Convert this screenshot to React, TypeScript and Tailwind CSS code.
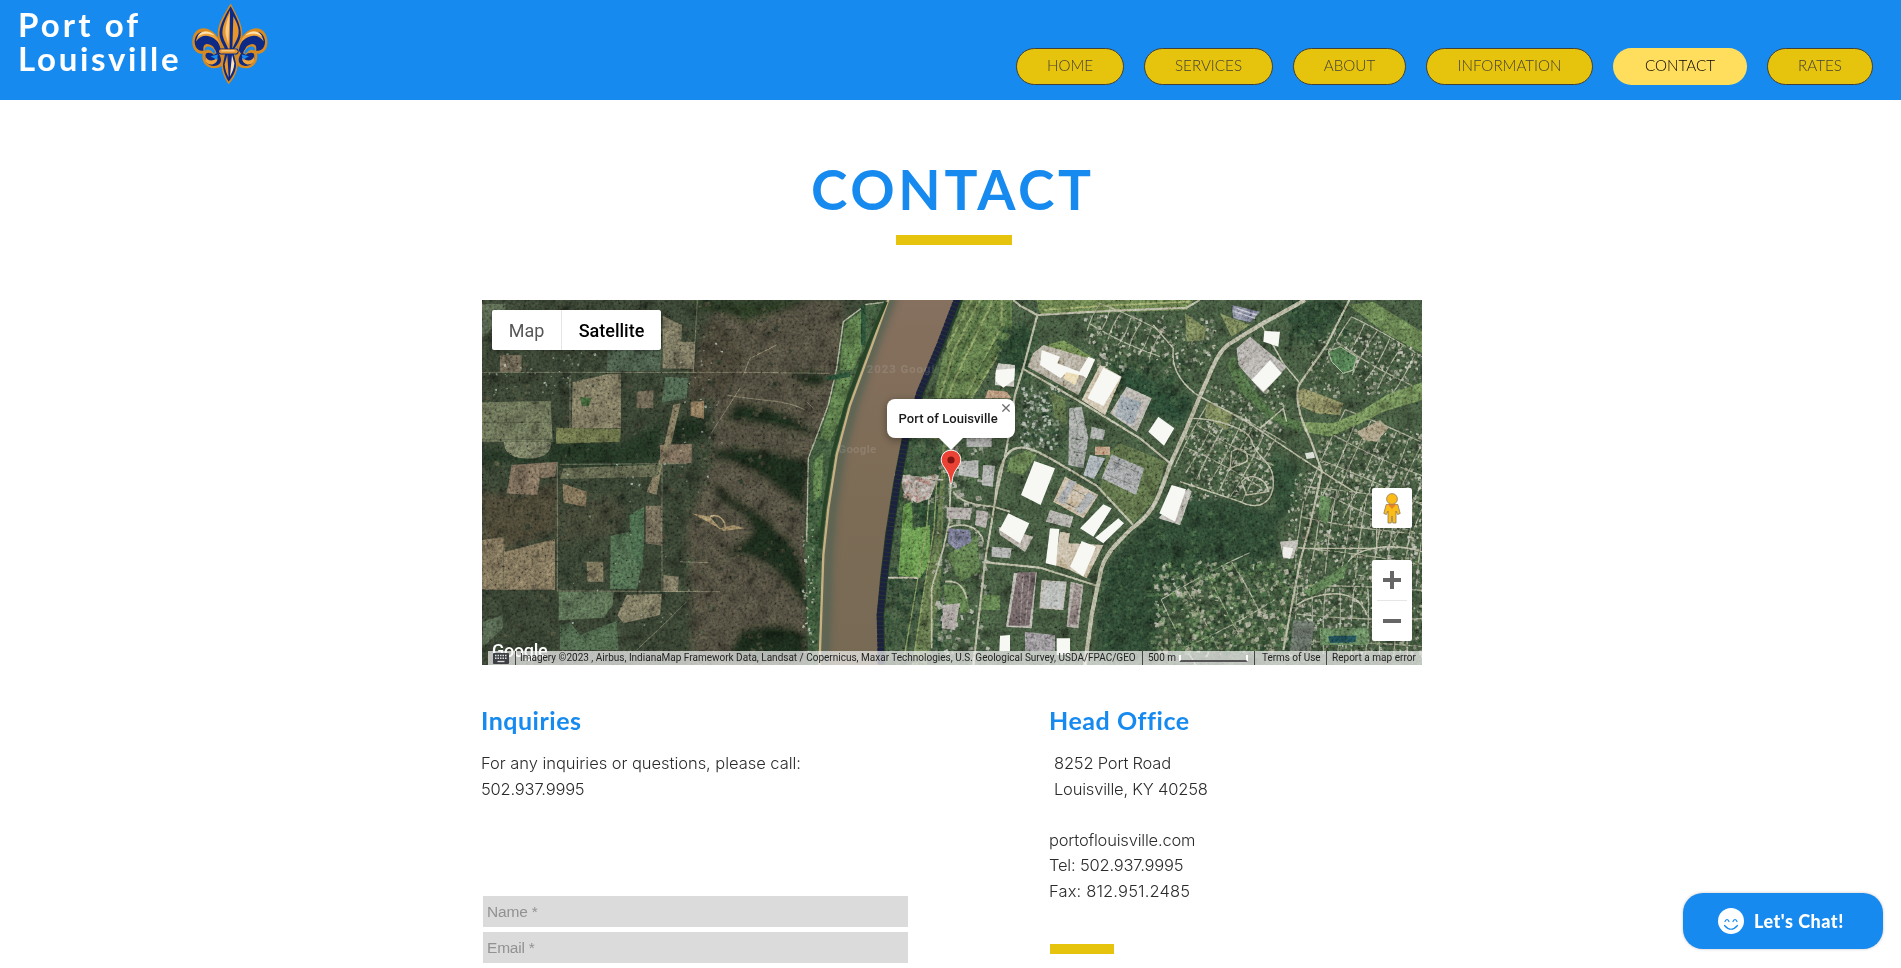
import type { ReactNode } from "react";

const NAV = [
  { label: "HOME", width: "w-[108px]" },
  { label: "SERVICES", width: "w-[129px]" },
  { label: "ABOUT", width: "w-[113px]" },
  { label: "INFORMATION", width: "w-[167px]" },
  { label: "CONTACT", width: "w-[134px]", active: true },
  { label: "RATES", width: "w-[106px]" },
];

function FleurDeLis() {
  const side = (
    <g>
      <path d="M668 150C656 74 581 62 577 122C575 150 594 164 608 160C602 188 624 210 654 203C674 198 676 172 668 160Z" fill="#d98a1f" />
      <path d="M663 150C648 88 590 78 584 122C583 142 596 156 611 151C606 132 622 124 640 140L650 160C632 162 628 154 618 160C608 184 630 204 652 195C668 188 664 172 656 160Z" fill="#0c2a86" />
      <path d="M588 124C596 76 646 84 662 136C642 104 606 96 588 124Z" fill="#f0a43a" />
      <path d="M592 110C604 88 628 90 644 106C624 98 608 98 592 110Z" fill="#ffe2b0" />
      <path d="M612 148C616 134 630 134 642 147C650 156 648 162 640 162C636 152 624 146 616 153Z" fill="#168aef" stroke="#d98a1f" strokeWidth="3" />
      <path d="M616 166C620 184 640 186 652 172C656 190 628 204 616 182Z" fill="#f0a43a" />
      <path d="M632 168L654 163L650 179Z" fill="#168aef" />
    </g>
  );
  return (
    <svg viewBox="570 0 240 260" className="h-[87px] w-[80px]">
      {side}
      <g transform="translate(1379 0) scale(-1 1)">{side}</g>
      <path d="M692 10C672 42 648 78 654 112C658 130 668 142 672 154L664 190C664 214 676 240 686 252C700 238 714 214 713 190L704 154C712 140 724 128 727 108C730 76 708 40 692 10Z" fill="#d98a1f" />
      <path d="M692 18C674 48 655 80 659 108C663 128 673 138 677 152L669 192C669 212 678 232 686 244C698 230 709 212 708 190L699 152C707 138 719 126 722 106C725 78 706 44 692 18Z" fill="#0c2a86" />
      <path d="M690 30C676 58 664 84 668 106C672 124 682 136 686 150L689 150Z" fill="#e8952a" />
      <path d="M700 48C712 70 720 88 714 108C710 122 702 132 697 146Z" fill="#e8952a" />
      <path d="M689 40C680 64 674 86 677 104L685 132Z" fill="#f9c987" />
      <path d="M682 164L674 192C675 208 680 222 686 232Z" fill="#e8952a" />
      <path d="M696 164L703 190C702 206 696 218 690 228Z" fill="#ffe2b0" />
      <rect x="654" y="145" width="62" height="18" rx="9" fill="#0c2a86" />
      <rect x="657" y="147" width="56" height="13" rx="6.5" fill="#e8952a" />
      <path d="M664 152H704" stroke="#ffe2b0" strokeWidth="3" />
    </svg>
  );
}

/* Small deterministic generator so the scattered houses stay in place. */
function makeRandom(seed: number) {
  let s = seed;
  return () => {
    s = (s * 16807) % 2147483647;
    return s / 2147483647;
  };
}

function Scatter({ seed, n, x, y, w, h, size, colors }: { seed: number; n: number; x: number; y: number; w: number; h: number; size: number; colors: string[] }) {
  const r = makeRandom(seed);
  const items: ReactNode[] = [];
  for (let i = 0; i < n; i++) {
    const px = x + r() * w;
    const py = y + r() * h;
    const a = size * (0.5 + r());
    const b = size * (0.5 + r());
    items.push(
      <rect key={i} x={px} y={py} width={a} height={b} fill={colors[Math.floor(r() * colors.length)]} transform={`rotate(${Math.floor(r() * 60) - 30} ${px} ${py})`} opacity={0.35 + r() * 0.45} />
    );
  }
  return <g>{items}</g>;
}

function Streets({ x, y, w, h, step, angle }: { x: number; y: number; w: number; h: number; step: number; angle: number }) {
  const lines: ReactNode[] = [];
  for (let i = 0; i * step < w; i++) lines.push(<path key={`v${i}`} d={`M${x + i * step} ${y}q${i % 2 ? 10 : -8} ${h / 2} 0 ${h}`} />);
  for (let j = 0; j * step * 2 < h; j++) lines.push(<path key={`h${j}`} d={`M${x} ${y + j * step * 2}q${w / 2} ${j % 2 ? 14 : -10} ${w} 0`} />);
  return (
    <g transform={`rotate(${angle} ${x + w / 2} ${y + h / 2})`} stroke="#9d9b83" strokeWidth="3.5" fill="none" opacity=".8">
      {lines}
    </g>
  );
}

const HOUSES = ["#aaa794", "#8f8b7a", "#77766a", "#c4c1b1", "#22391f", "#1d3420", "#2f4a2b", "#5c6b45"];
const TREES = ["#1c3522", "#1d3a22", "#27432a", "#33502f", "#183020"];
const SCRUB = ["#222b20", "#1d281e", "#403c30", "#343e2d", "#464534"];

function West() {
  return (
    <g transform="translate(480 295) scale(.33333)">
      <rect x="0" y="0" width="1260" height="1120" fill="#2d3528" />
      <g filter="url(#soft)">
        <path d="M700 15H1090V500L980 620V1110H640L620 700L700 480Z" fill="#413e30" />
        <path d="M0 590L90 600L230 560V710L70 770L0 730Z" fill="#3b392b" />
        <path d="M230 410L420 450L545 380V500L400 520L250 510L0 500V460L200 490Z" fill="#1a2a1f" />
        <path d="M760 330C840 320 960 360 1010 420C900 400 800 370 740 380ZM690 470C800 440 960 490 990 500L970 640C880 560 780 490 690 490Z" fill="#122218" />
        <path d="M700 560C760 630 850 640 900 720C940 730 980 800 980 940C920 860 860 760 730 780C800 730 860 720 780 650C730 630 700 600 700 560Z" fill="#122218" />
        <path d="M780 1010C850 980 940 990 975 1020V1100H740ZM930 230L1040 235L1030 270C990 280 950 260 930 230ZM560 380L680 370L660 430L580 445Z" fill="#132319" />
        <path d="M640 15H980C900 60 860 50 800 80C760 50 700 60 640 40Z" fill="#242e1f" />
        <path d="M250 640L390 600L440 640L400 720L240 740Z" fill="#35372a" />
        <path d="M690 60L800 180L720 300L620 330L640 200Z" fill="#383429" />
      </g>
      <Scatter seed={71} n={420} x={0} y={20} w={700} h={1080} size={11} colors={SCRUB} />
      <Scatter seed={19} n={260} x={640} y={30} w={350} h={1070} size={10} colors={["#353127", "#424033", "#1d2a1e", "#484335"]} />
      <g opacity=".93">
        <path d="M0 322L212 318L218 440H0Z" fill="#595e48" />
        <path d="M72 440H214C214 480 180 494 130 490C90 486 72 470 72 440Z" fill="#626650" />
        <path d="M278 262L380 238L423 236V400H275Z" fill="#67624e" />
        <path d="M228 398L423 402L420 440L228 446Z" fill="#585d3b" />
        <path d="M95 510L232 500L225 545L180 550L172 600L80 595Z" fill="#66594a" />
        <path d="M248 566L320 590L318 636L250 622Z" fill="#695d48" />
        <path d="M392 722L450 710L480 830L472 882H390Z" fill="#415840" />
        <path d="M448 660L492 636V750L486 830L455 780Z" fill="#39523b" />
        <path d="M0 736L70 726L75 770L225 732V884H0Z" fill="#6a5f4b" />
        <path d="M236 892L402 890L398 930L370 968L236 976Z" fill="#495a43" />
        <path d="M440 900L546 896L540 960L430 985L412 960Z" fill="#686450" />
        <path d="M497 632H546V752L497 745Z" fill="#5e5748" />
        <path d="M320 800H370V860H322Z" fill="#665f4b" />
        <path d="M240 990L270 982L300 1020L410 978L416 1065H240Z" fill="#40543e" />
        <path d="M548 62L606 90L604 140H645L642 222L548 220Z" fill="#66624f" />
        <path d="M382 160L545 165L540 228H382Z" fill="#3c4a3c" />
        <path d="M6 28L76 26V60L6 130Z" fill="#465140" />
        <path d="M540 450L635 446V505H540Z" fill="#66594a" />
        <path d="M580 330L602 325L575 440L548 500L530 600L500 590L548 470Z" fill="#68604c" />
        <path d="M250 520L545 508L530 545L240 552Z" fill="#50533f" />
        <path d="M555 245L625 250L620 310L545 322Z" fill="#405340" />
        <path d="M550 840L596 845L594 890H550Z" fill="#686350" />
        <path d="M10 980L68 960V1000L6 1060Z" fill="#445240" />
        <path d="M60 180H125V230H60ZM470 290L520 285V340H470Z" fill="#5a5344" />
        <path d="M632 320L672 318V372L632 362Z" fill="#75644b" />
        <path d="M635 655L690 665L720 700L760 690L795 700L730 708L700 690Z" fill="#7f6e51" />
        <path d="M690 665C710 655 740 670 735 705" stroke="#a08b66" strokeWidth="4" fill="none" />
        <path d="M300 305L335 310L325 335L305 330Z" fill="#35502f" />
        <path d="M0 382H215M0 433H215M70 740V884" stroke="#3f4436" strokeWidth="2" />
      </g>
      <g fill="none" stroke="#8d8872" strokeWidth="2.5" opacity=".55">
        <path d="M0 232H790L1050 235M232 500V890M240 508L620 506M235 888L720 890M652 15L640 230M546 510V890M790 240L810 190L890 150M740 300C840 320 930 310 990 355M600 800L685 803M270 400L270 240M470 1065L560 980L620 920M1000 340L980 320M780 280L690 420" />
      </g>
      <Scatter seed={5} n={60} x={20} y={170} w={330} h={130} size={5} colors={["#a9b2a8", "#707866", "#202b20"]} />
      <Scatter seed={55} n={50} x={600} y={120} w={130} h={350} size={5} colors={["#a9b2a8", "#707866", "#202b20"]} />
      <Scatter seed={8} n={70} x={260} y={500} w={440} h={500} size={5} colors={["#9baba3", "#5e6a58", "#203020"]} />
      <path d="M1230 15L1160 25L1090 80L1070 220L1045 330L985 490L975 760L985 1110H1020L1045 640L1110 330L1180 140Z" fill="#334730" />
      <path d="M1095 85L1150 45L1145 170L1120 225H1078ZM1075 240H1115L1090 350L1050 440L1020 430ZM1000 500L1030 470L1025 600L1000 620Z" fill="#48613a" />
      <Scatter seed={94} n={90} x={985} y={600} w={40} h={500} size={8} colors={TREES} />
      <Scatter seed={34} n={55} x={965} y={700} w={35} h={390} size={6} colors={["#9aa99e", "#a9aa97", "#263d2a"]} />
      <path d="M1230 20L1160 28L1090 80L1070 220L1045 330L985 490L980 740" fill="none" stroke="#8f937c" strokeWidth="4" />
      <path d="M1150 30V150M1040 250L1110 238" fill="none" stroke="#203c29" strokeWidth="14" />
    </g>
  );
}

function River() {
  return (
    <g transform="translate(480 295) scale(.33333)">
      <path d="M1425 0L1370 150L1310 290L1265 430L1240 560L1215 720L1200 850L1190 960L1195 1120H1500V0Z" fill="#263e27" />
      <path d="M1230 0L1180 140L1110 330L1070 480L1045 640L1030 780L1020 1120H1197L1190 960L1200 850L1215 720L1240 560L1265 430L1310 290L1370 150L1427 0Z" fill="url(#river)" />
      <path d="M1240 0L1190 130L1120 335L1082 480L1057 640L1045 780L1034 1110" fill="none" stroke="#566453" strokeWidth="30" filter="url(#soft)" opacity=".85" />
      <path d="M1230 0L1180 140L1110 330L1070 480L1045 640L1030 780L1018 1120" fill="none" stroke="#c5b181" strokeWidth="7" />
      <path d="M1218 20L1168 140L1098 330L1058 480L1033 640L1020 760" fill="none" stroke="#284427" strokeWidth="11" />
      <path d="M1436 0L1379 150L1320 290L1277 430L1252 560L1228 720L1212 850L1200 960L1203 1120" fill="none" stroke="#1d2140" strokeWidth="20" strokeDasharray="11 2" />
      <text x="1160" y="234" fontFamily="Roboto" fontSize="34" fontWeight="700" letterSpacing="3" fill="#ffffff" opacity=".12">2023 Google</text>
      <text x="1075" y="474" fontFamily="Roboto" fontSize="34" fontWeight="700" letterSpacing="1" fill="#ffffff" opacity=".12">Google</text>
    </g>
  );
}

function East() {
  return (
    <g transform="translate(940 295) scale(.33333)">
      <path d="M60 0H1460V1120H-185L-178 850L-130 560L-60 330Z" fill="#34482f" />
      <Scatter seed={23} n={420} x={-185} y={300} w={190} h={800} size={14} colors={TREES} />
      <path d="M70 15H216V110L95 310H-20L10 180Z" fill="#49612f" />
      <path d="M216 110L95 310M160 15L60 220L20 310M120 15L40 170L0 310M185 15V90L80 300M95 15L20 160" stroke="#66783f" strokeWidth="6" fill="none" />
      <path d="M140 15L60 180L10 300M205 20V80L110 240" stroke="#3a5529" strokeWidth="8" fill="none" />
      <path d="M-110 630L-85 620L-80 700L-30 690V800L-60 850L-125 840Z" fill="#4b7a2c" />
      <Scatter seed={24} n={40} x={-90} y={610} w={60} h={80} size={16} colors={TREES} />
      <path d="M-50 425L10 440L-10 700L-50 900L-85 1110H-40L0 900L20 430Z" fill="#4b5d33" />
      <path d="M-30 560L-40 700L-75 900L-110 1100M-10 560L-18 700L-55 930L-82 1110" stroke="#66763f" strokeWidth="4" fill="none" />
      <path d="M-200 530L-130 540L10 555M-175 848H-80L-65 850" stroke="#aaa58c" strokeWidth="5" fill="none" />
      <path d="M-120 540L-60 545L-10 560L-30 610L-70 625L-110 590Z" fill="#8d8176" />
      <Scatter seed={62} n={60} x={-110} y={540} w={95} h={75} size={10} colors={["#c9b8ae", "#776b62", "#c3beb5", "#a9665b"]} />

      <path d="M290 15H760L740 45L300 60Z" fill="#526833" />
      <path d="M310 45L500 32L750 20" stroke="#7b8c48" strokeWidth="5" fill="none" />
      <g filter="url(#soft)">
        <path d="M230 90L290 110L270 160L210 280L180 170Z" fill="#1e3823" />
        <path d="M500 180L640 260L760 310L730 390L640 360L550 280Z" fill="#1e3a25" />
        <path d="M740 600L900 620L1010 660V790L850 800L680 900L640 1080H470L500 820L580 720Z" fill="#203b27" />
        <path d="M1050 20L1210 15L1170 100L1100 130L1040 70Z" fill="#203b25" />
        <path d="M990 480L1080 520L1060 640L1010 680L1000 560Z" fill="#203d27" />
      </g>
      <Scatter seed={13} n={460} x={530} y={650} w={470} h={170} size={10} colors={TREES} />
      <Scatter seed={43} n={380} x={470} y={800} w={190} h={290} size={10} colors={TREES} />
      <Scatter seed={44} n={200} x={1040} y={20} w={180} h={120} size={11} colors={TREES} />
      <Scatter seed={46} n={200} x={500} y={180} w={230} h={150} size={12} colors={TREES} />
      <Scatter seed={49} n={130} x={170} y={90} w={90} h={160} size={12} colors={TREES} />

      <Streets x={1140} y={400} w={340} h={300} step={42} angle={24} />
      <Streets x={1080} y={600} w={370} h={250} step={46} angle={8} />
      <Streets x={740} y={370} w={260} h={220} step={38} angle={28} />
      <Streets x={1070} y={880} w={380} h={200} step={42} angle={2} />
      <Streets x={1180} y={120} w={260} h={150} step={44} angle={30} />
      <Streets x={450} y={70} w={230} h={90} step={34} angle={25} />
      <Streets x={700} y={830} w={300} h={230} step={80} angle={-28} />
      <Scatter seed={31} n={1200} x={1130} y={400} w={320} h={450} size={7.5} colors={HOUSES} />
      <Scatter seed={37} n={600} x={735} y={380} w={255} h={230} size={7} colors={HOUSES} />
      <Scatter seed={39} n={1000} x={630} y={800} w={430} h={270} size={11} colors={["#aaa78f", "#83866e", "#22391f", "#2e522c", "#587544", "#17351f", "#1d3420", "#4a6838"]} />
      <Scatter seed={41} n={700} x={1060} y={840} w={390} h={230} size={7.5} colors={HOUSES} />
      <Scatter seed={47} n={480} x={1110} y={110} w={330} h={190} size={7} colors={HOUSES} />
      <Scatter seed={53} n={380} x={430} y={60} w={390} h={170} size={8} colors={HOUSES} />
      <Scatter seed={59} n={260} x={800} y={270} w={230} h={140} size={7.5} colors={HOUSES} />
      <Scatter seed={61} n={300} x={240} y={270} w={120} h={190} size={8} colors={["#b3b8b2", "#17301f", "#1f3b25", "#6c7764"]} />
      <Scatter seed={67} n={250} x={1040} y={530} w={100} h={400} size={7.5} colors={HOUSES} />
      <Scatter seed={73} n={230} x={-20} y={450} w={160} h={620} size={12} colors={["#8f8b80", "#6f7568", "#2b4729", "#3f5d33", "#aaa69b"]} />

      <path d="M1225 30L1300 20L1446 110V175L1330 110Z" fill="#4d6735" />
      <path d="M1446 262V315L1330 350L1240 395L1170 425L1095 410L1080 380L1180 385L1260 350L1340 300Z" fill="#56703a" />
      <path d="M880 180L930 270L1000 350L1090 385L1080 410L985 370L900 290L860 210Z" fill="#3b592f" />
      <path d="M1070 290L1090 280L1210 325L1200 360L1130 355L1075 330Z" fill="#6e7043" />
      <path d="M1165 170L1200 155L1250 185L1240 225L1210 235L1175 200Z" fill="#386238" stroke="#94a079" strokeWidth="3" />
      <path d="M735 55L800 100L790 135L740 140ZM840 55L930 90L875 125ZM800 320L880 360L860 405L795 365Z" fill="#606c3d" />
      <path d="M330 290L375 310L380 390L345 370ZM540 445L680 500L640 620L580 685L480 590L500 480Z" fill="#485b32" />
      <path d="M320 150L370 135L455 185L410 205Z" fill="#536b32" />
      <path d="M210 490L260 465L290 480L250 540L200 530Z" fill="#4e6635" />
      <path d="M1090 890L1200 820L1225 800L1210 850L1110 905ZM1140 600L1175 610L1160 690L1135 670Z" fill="#48693b" />
      <path d="M120 900H180V945H115ZM10 870H75L90 950L20 960ZM20 780L110 720L120 830L60 860Z" fill="#466233" />
      <path d="M1250 410L1320 375L1345 400L1310 440L1270 435Z" fill="#8f8062" />
      <path d="M1060 975L1125 980L1110 1070H1050Z" fill="#50584f" />
      <path d="M1140 1000H1285V1050H1140Z" fill="#4c6c44" />
      <path d="M1165 1025C1190 1018 1230 1026 1250 1020L1245 1042L1170 1044Z" fill="#0c3f46" />
      <path d="M875 30L960 50L930 82L880 70Z" fill="#6f738a" />
      <path d="M885 50L945 70M890 40L950 60" stroke="#b4b6c6" strokeWidth="4" />
      <path d="M25 700L90 705L95 740L50 765L25 745Z" fill="#62657c" />

      <g fill="none" stroke="#a3a283" strokeLinejoin="round">
        <path d="M1095 15L960 90L870 145C830 170 810 240 790 280L740 400L690 510C660 590 650 650 575 700C530 745 490 780 480 840L455 960L435 1110" strokeWidth="12" />
        <path d="M220 15L240 32L292 60L500 48L740 38L780 15M292 60L255 200L225 300L200 460L165 620L135 800L100 1110" strokeWidth="6" />
        <path d="M250 222L420 320L600 430L690 505" strokeWidth="6" />
        <path d="M165 620C175 500 200 460 240 458C280 455 330 490 470 572L580 690M135 802L300 818L470 872" strokeWidth="6" />
        <path d="M1228 15L1160 150L1080 265C1060 300 1080 370 1110 430L1146 530L1110 690L1080 800L1030 1065" strokeWidth="6" />
        <path d="M780 305L920 380L1040 460L1146 530L1250 595M1080 265L1030 205L965 90M640 90L700 160C690 230 740 280 780 305M760 370C820 370 930 400 935 440C960 500 1000 500 1000 560C1000 620 960 650 900 620L720 560" strokeWidth="4" />
        <path d="M875 470C900 450 930 470 920 500L870 520ZM905 560C930 530 980 550 985 590L920 600Z" strokeWidth="4" />
        <path d="M1040 380L1030 340L960 400M1085 760H1310V690M1225 800C1250 760 1350 740 1446 770M1070 930C1130 890 1250 870 1280 960" strokeWidth="4" />
        <path d="M32 560L28 680L10 760L-25 880V1060M15 860C50 855 70 870 80 910M40 590C60 620 100 630 160 635L210 650M20 700C60 680 120 690 130 740" strokeWidth="5" />
      </g>

      <g fill="#a8a398">
        <path d="M280 175L310 150L465 195L415 300L262 215Z" fill="#a0967f" />
        <path d="M480 210L545 245L495 360L425 315Z" fill="#c6b695" />
        <path d="M560 275L635 310L590 410L510 355Z" />
        <path d="M388 340L425 335L445 430L430 520L385 510ZM455 395L495 405L490 435L450 430Z" fill="#8a8f89" />
        <path d="M515 478L612 520L588 600L485 550Z" fill="#85898a" />
        <path d="M450 480L495 490L462 552L430 540Z" fill="#94a0a8" />
        <path d="M375 545L475 600L430 670L340 620Z" fill="#b9a480" />
        <path d="M330 645L400 665L390 698L318 680Z" fill="#9b988f" />
        <path d="M890 160L930 125L1040 215L970 295L895 210Z" fill="#a39e97" />
        <path d="M175 695L280 725L255 770L180 720Z" fill="#a69c8e" />
        <path d="M360 710L390 715L385 745L490 750L440 850L390 825L345 810Z" fill="#baaa88" />
        <path d="M745 580L755 590L720 690L655 670Z" />
        <path d="M165 235L175 205L225 210L222 275L165 270Z" fill="#b8b5aa" />
        <path d="M222 835L290 832L275 1000L198 995Z" />
        <path d="M305 855L380 860L370 945L298 940Z" />
        <path d="M392 860L430 870L415 1000L380 995Z" fill="#968c84" />
        <path d="M155 755L215 760L210 790L155 785ZM60 500L115 495V550L55 540ZM130 510L165 512L158 575L125 570ZM80 430H155V455H80Z" fill="#999b96" />
        <path d="M255 1010L345 1020V1068H255Z" fill="#7e7a7e" />
        <path d="M20 635L95 640L90 675L20 670ZM110 645L145 650L138 700L105 690ZM10 930L60 925L45 1005L5 1000Z" fill="#978f89" />
        <path d="M145 285L200 290L215 310H135ZM465 455H510V480H465Z" fill="#a97759" />
        <path d="M1020 740L1075 735L1060 790H1030Z" />
      </g>
      <path d="M910 145L990 245M890 185L925 140M905 210L955 155M925 235L980 180M945 260L1010 200M935 125L1025 230" stroke="#67655c" strokeWidth="2" opacity=".65" />
      <path d="M542 300L604 322L578 392L525 362Z" fill="#7f8d97" />
      <path d="M232 832H288L268 992H205Z" fill="#5c5152" />
      <path d="M250 840L240 990M270 840L256 990" stroke="#857774" strokeWidth="2" />
      <path d="M318 862H374L365 940L305 935Z" fill="#a0a5a1" />
      <path d="M405 865L425 875L410 992L385 985Z" fill="#6f6460" />
      <path d="M400 345L415 400M395 430L425 435M400 470L430 475M520 500L600 535M500 540L580 570M385 575L440 605M350 610L430 650" stroke="#5f625c" strokeWidth="3" />
      <path d="M380 225L420 235L405 270L370 250Z" fill="#ead392" />
      <path d="M388 555L410 560L372 630L350 615ZM445 590L470 602L425 660L405 645Z" fill="#8f9394" />
    </g>
  );
}

function Roofs() {
  return (
    <g transform="translate(940 295) scale(.33333)" fill="#f7f7f3">
      <path d="M305 165L360 185L352 205L418 230L445 185L465 193L440 250L428 242L380 232L362 250L300 210Z" />
      <path d="M490 218L543 245L490 333L442 310Z" />
      <path d="M168 225L225 220L222 255L190 278L168 260Z" />
      <path d="M655 365L703 400L672 452L625 410Z" />
      <path d="M283 498L345 520L302 630L243 600Z" />
      <path d="M695 570L738 583L705 680L658 655Z" />
      <path d="M205 655L268 685L240 745L178 705Z" />
      <path d="M330 700L358 702L348 812L317 805Z" />
      <path d="M425 738L468 755L430 845L390 815Z" />
      <path d="M490 628L515 640L460 725L420 700ZM535 670L552 685L490 745L465 728Z" />
      <path d="M990 195L1025 235L970 290L935 255Z" />
      <path d="M973 108L1020 110L1015 155L970 140Z" />
      <path d="M180 1022L210 1020V1068H178ZM350 1030H390V1080H350Z" />
      <path d="M1030 755L1060 760L1050 792L1028 785ZM1095 475L1120 470L1125 488L1100 492Z" opacity=".85" />
    </g>
  );
}

function Satellite() {
  return (
    <svg viewBox="482 300 940 365" className="h-[365px] w-[940px]">
      <defs>
        <filter id="soft" x="-20%" y="-20%" width="140%" height="140%">
          <feGaussianBlur stdDeviation="9" />
        </filter>
        <filter id="grain" x="0" y="0" width="100%" height="100%">
          <feTurbulence type="fractalNoise" baseFrequency=".38" numOctaves="3" seed="4" />
          <feColorMatrix values="1.5 0 0 0 -.27  1.5 0 0 0 -.27  1.5 0 0 0 -.27  0 0 0 0 1" />
        </filter>
        <filter id="clouds" x="0" y="0" width="100%" height="100%">
          <feTurbulence type="fractalNoise" baseFrequency=".07" numOctaves="3" seed="9" />
          <feColorMatrix values="1.6 0 0 0 -.35  1.6 0 0 0 -.35  1.6 0 0 0 -.35  0 0 0 0 1" />
        </filter>
        <filter id="mute">
          <feColorMatrix type="saturate" values=".82" />
        </filter>
        <linearGradient id="river" x1="0" y1="0" x2="0" y2="1">
          <stop offset="0" stopColor="#86705f" />
          <stop offset=".5" stopColor="#7d6c56" />
          <stop offset="1" stopColor="#776a55" />
        </linearGradient>
        <clipPath id="riverOnly">
          <path transform="translate(480 295) scale(.33333)" d="M1205 0L1155 140L1085 330L1045 480L1022 640L1005 780L1000 1120H1216L1213 960L1224 850L1240 720L1265 560L1290 430L1335 290L1395 150L1455 0Z" />
        </clipPath>
      </defs>
      <West />
      <g filter="url(#mute)">
        <East />
      </g>
      <rect x="482" y="300" width="940" height="365" filter="url(#clouds)" opacity=".25" className="mix-blend-overlay" />
      <rect x="482" y="300" width="940" height="365" filter="url(#grain)" opacity=".42" className="mix-blend-overlay" />
      <Roofs />
      <g clipPath="url(#riverOnly)">
        <River />
      </g>
    </svg>
  );
}

function Pin() {
  return (
    <svg viewBox="0 0 22 36" className="absolute left-[457.500px] top-[148.500px] h-[36px] w-[22px]">
      <path d="M11 1.2C5.4 1.2 1.2 5.5 1.2 10.8C1.2 18 9.4 20.5 10.1 34C10.2 35 11.8 35 11.9 34C12.6 20.5 20.8 18 20.8 10.8C20.8 5.5 16.6 1.2 11 1.2Z" fill="#ea4335" stroke="#fff" strokeWidth="1" />
      <circle cx="11" cy="11" r="3.6" fill="#811411" />
    </svg>
  );
}

function MapPanel() {
  return (
    <div className="relative h-[365px] w-[940px] overflow-hidden bg-[#323829] font-['Roboto',sans-serif]">
      <Satellite />
      <div className="absolute left-[10px] top-[10px] flex h-[40px] w-[169px] items-center rounded-[2px] bg-white text-[18px] shadow-[0_1px_4px_-1px_rgba(0,0,0,.3)]">
        <div className="flex h-full w-[70px] items-center justify-center border-r border-[#e6e6e6] text-[#565656]">Map</div>
        <div className="flex h-full flex-1 items-center justify-center font-medium text-black">Satellite</div>
      </div>

      <div className="absolute left-[405px] top-[99px] h-[39px] w-[128px] rounded-[8px] bg-white pl-[11.5px] text-[13px] leading-[39px] font-medium tracking-[0.05px] whitespace-nowrap text-[#1a1a1a] shadow-[0_2px_7px_1px_rgba(0,0,0,.3)]">
        Port of Louisville
        <svg viewBox="0 0 8 8" className="absolute right-[5px] top-[5px] size-[8px]">
          <path d="M.4 .4L7.6 7.6M7.6 .4L.4 7.6" stroke="#6b6b6b" strokeWidth="1.3" />
        </svg>
      </div>
      <svg viewBox="0 0 24 12" className="absolute left-[457px] top-[138px] h-[12px] w-[24px]">
        <path d="M0 0H24L12 12Z" fill="#fff" />
      </svg>
      <Pin />

      <div className="absolute left-[890px] top-[188px] flex size-[40px] items-center justify-center rounded-[2px] bg-white shadow-[0_1px_4px_-1px_rgba(0,0,0,.3)]">
        <svg viewBox="0 0 18 31" className="h-[31px] w-[18px]">
          <path d="M3.2 11.5L14.8 11.5L17.2 20.5L14.6 21.5L13 18V30H9.8L9 23L8.2 30H5V18L3.4 21.5L.8 20.5Z" fill="#fbbc17" stroke="#8b7a61" strokeWidth=".8" />
          <path d="M4.5 11L9 16L13.5 11Z" fill="#e5812c" />
          <circle cx="9" cy="6" r="5.4" fill="#fbbc17" stroke="#8b7a61" strokeWidth=".8" />
        </svg>
      </div>
      <div className="absolute left-[890px] top-[260px] flex h-[81px] w-[40px] flex-col items-center rounded-[2px] bg-white shadow-[0_1px_4px_-1px_rgba(0,0,0,.3)]">
        <div className="flex h-[40px] items-center">
          <svg viewBox="0 0 18 18" className="size-[18px]"><path d="M7 0H11V7H18V11H11V18H7V11H0V7H7Z" fill="#666" /></svg>
        </div>
        <div className="h-px w-[30px] bg-[#e6e6e6]" />
        <div className="flex h-[40px] items-center">
          <svg viewBox="0 0 18 4" className="h-[4px] w-[18px]"><path d="M0 0H18V4H0Z" fill="#666" /></svg>
        </div>
      </div>

      <div className="absolute left-[10px] top-[339px] text-[18px] leading-[24px] font-medium tracking-[-0.3px] text-white">Google</div>
      <div className="absolute bottom-0 left-[6px] flex h-[14px] w-[934px] items-center bg-[rgba(245,245,245,.7)] text-[10px] leading-[14px] whitespace-nowrap text-[#222]">
        <div className="flex h-full w-[28px] items-center justify-center border-r border-[#444] pr-[2px]">
          <svg viewBox="0 0 16 11" className="h-[11px] w-[16px]">
            <rect width="16" height="11" rx="1" fill="#3c4043" />
            <path d="M2 2.5H14M2 5.2H14" stroke="#ddd" strokeWidth="1.4" strokeDasharray="1.5 1" />
            <path d="M4.5 8.5H11.5" stroke="#ddd" strokeWidth="1.3" />
          </svg>
        </div>
        <div className="h-full w-[627px] border-r border-[#444] pl-[4px]">Imagery ©2023 , Airbus, IndianaMap Framework Data, Landsat / Copernicus, Maxar Technologies, U.S. Geological Survey, USDA/FPAC/GEO</div>
        <div className="flex h-full w-[112px] items-center gap-[3px] border-r border-[#444] pl-[5px]">
          <span className="w-[28px]">500 m</span>
          <span className="h-[7px] w-[69px] border-x-2 border-b-2 border-[#555] border-x-white" />
        </div>
        <div className="h-full w-[72px] border-r border-[#444] pl-[7px] tracking-[-0.05px]">Terms of Use</div>
        <div className="pl-[5px] tracking-[0.02px]">Report a map error</div>
      </div>
    </div>
  );
}

export default function App() {
  return (
    <div className="relative h-[968px] w-full overflow-hidden bg-white">
      <header className="flex h-[100px] bg-[#168aef] pr-[28px]">
        <div className="flex w-[190px] shrink-0 flex-col pt-[7px] pl-[18px] font-['Lato',sans-serif] text-[33px] leading-[34px] font-bold whitespace-nowrap text-white">
          <span className="tracking-[3.1px]">Port of</span>
          <span className="tracking-[2.7px]">Louisville</span>
        </div>
        <FleurDeLis />
        <nav className="ml-auto flex gap-[20px] pt-[48px]">
          {NAV.map((item) => (
            <a
              key={item.label}
              className={`${item.width} flex h-[37px] items-center justify-center rounded-[18.5px] pb-[2px] font-['Lato',sans-serif] text-[15.2px] font-light ${
                item.active ? "bg-[#ffdd5d] text-black" : "border border-[#413f3a] bg-[#e6c30c] text-[#413f3a]"
              }`}
            >
              {item.label}
            </a>
          ))}
        </nav>
      </header>

      <main className="ml-[482px] w-[940px]">
        <h1 className="h-[135px] pt-[56px] pl-[329px] font-['Lato',sans-serif] text-[55px] leading-[66px] font-bold tracking-[3.7px] whitespace-nowrap text-[#168aef]">CONTACT</h1>
        <div className="ml-[414px] h-[10px] w-[116px] bg-[#e6c30c]" />
        <div className="mt-[55px]">
          <MapPanel />
        </div>

        <div className="flex pt-[40px] font-['Inter',sans-serif] text-[16.5px] leading-[25.5px] font-light text-[#2b2b2b]">
          <section className="w-[568px]">
            <h2 className="-ml-px h-[46px] font-['Lato',sans-serif] text-[25px] leading-[30px] font-bold tracking-[0.5px] text-[#168aef]">Inquiries</h2>
            <p className="-ml-px tracking-[-0.04px]">For any inquiries or questions, please call:</p>
            <p className="-ml-px tracking-[-0.2px]">502.937.9995</p>
            <form className="mt-[94px] ml-px flex w-[425px] flex-col gap-[5px]">
              <input className="h-[31px] bg-[#dbdbdb] px-[4px] font-['Liberation_Sans',sans-serif] text-[15.5px] font-normal tracking-[-0.2px] placeholder:text-[#929292]" placeholder="Name *" />
              <input className="h-[31px] bg-[#dbdbdb] px-[4px] font-['Liberation_Sans',sans-serif] text-[15.5px] font-normal tracking-[-0.2px] placeholder:text-[#929292]" placeholder="Email *" />
            </form>
          </section>
          <section className="tracking-[-0.2px]">
            <h2 className="-ml-px h-[46px] font-['Lato',sans-serif] text-[25px] leading-[30px] font-bold tracking-[0.55px] text-[#168aef]">Head Office</h2>
            <p className="pl-[4px]">8252 Port Road</p>
            <p className="pl-[4px]">Louisville, KY 40258</p>
            <p className="-ml-px pt-[25.5px]">portoflouisville.com</p>
            <p className="-ml-px">Tel: 502.937.9995</p>
            <p className="-ml-px tracking-[0.15px]">Fax: 812.951.2485</p>
            <div className="mt-[39.5px] h-[10px] w-[64px] bg-[#e6c30c]" />
          </section>
        </div>
      </main>

      <button className="absolute top-[893px] left-[1683px] flex h-[56px] w-[200px] items-center rounded-[20px] bg-[#168aef] pl-[35px] font-['Lato',sans-serif] text-[18px] font-black tracking-[0.5px] text-white shadow-[0_0_3px_rgba(0,0,0,.25)]">
        <svg viewBox="0 0 26 26" className="mr-[10px] size-[26px]">
          <circle cx="13" cy="13" r="13" fill="#fff" />
          <path d="M7 13.5Q9 9.500 11 13.500M15 13.500Q17 9.500 19 13.500M6.500 17.500Q13 25 19.500 17.500" fill="none" stroke="#168aef" strokeWidth="1.200" strokeLinecap="round" />
        </svg>
        Let&apos;s Chat!
      </button>
    </div>
  );
}
